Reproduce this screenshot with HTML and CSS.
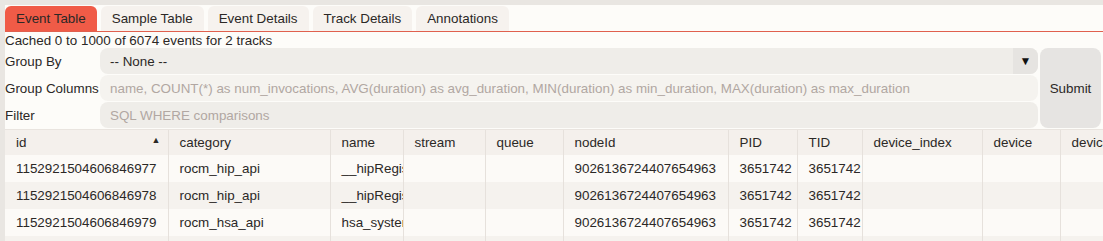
FILE: index.html
```html
<!DOCTYPE html>
<html>
<head>
    <link rel="stylesheet" href="styles.css">
</head>
<body>
    <div class="panel">
        <div class="tabs">
            <div class="tab active">Event Table</div>
            <div class="tab">Sample Table</div>
            <div class="tab">Event Details</div>
            <div class="tab">Track Details</div>
            <div class="tab">Annotations</div>
        </div>

        <div class="status">Cached 0 to 1000 of 6074 events for 2 tracks</div>

        <div class="query">
            <div class="fields">
                <div class="field">
                    <label>Group By</label>
                    <div class="select">
                        <span>-- None --</span>
                        <span class="arrow">&#9660;</span>
                    </div>
                </div>
                <div class="field">
                    <label>Group Columns</label>
                    <input class="text-input light" type="text" placeholder="name, COUNT(*) as num_invocations, AVG(duration) as avg_duration, MIN(duration) as min_duration, MAX(duration) as max_duration">
                </div>
                <div class="field">
                    <label>Filter</label>
                    <input class="text-input" type="text" placeholder="SQL WHERE comparisons">
                </div>
            </div>
            <button class="submit">Submit</button>
        </div>

        <div class="table-wrap">
            <table class="events">
                <colgroup>
                    <col style="width:163px">
                    <col style="width:162px">
                    <col style="width:73px">
                    <col style="width:82px">
                    <col style="width:78px">
                    <col style="width:165px">
                    <col style="width:69px">
                    <col style="width:65px">
                    <col style="width:120px">
                    <col style="width:78px">
                    <col style="width:90px">
                </colgroup>
                <thead>
                    <tr>
                        <th>id<span class="sort">&#9650;</span></th>
                        <th>category</th>
                        <th>name</th>
                        <th>stream</th>
                        <th>queue</th>
                        <th>nodeId</th>
                        <th>PID</th>
                        <th>TID</th>
                        <th>device_index</th>
                        <th>device</th>
                        <th>device_type</th>
                    </tr>
                </thead>
                <tbody>
                    <tr>
                        <td>1152921504606846977</td>
                        <td>rocm_hip_api</td>
                        <td>__hipRegisterFunction</td>
                        <td></td>
                        <td></td>
                        <td>9026136724407654963</td>
                        <td>3651742</td>
                        <td>3651742</td>
                        <td></td>
                        <td></td>
                        <td></td>
                    </tr>
                    <tr>
                        <td>1152921504606846978</td>
                        <td>rocm_hip_api</td>
                        <td>__hipRegisterFunction</td>
                        <td></td>
                        <td></td>
                        <td>9026136724407654963</td>
                        <td>3651742</td>
                        <td>3651742</td>
                        <td></td>
                        <td></td>
                        <td></td>
                    </tr>
                    <tr>
                        <td>1152921504606846979</td>
                        <td>rocm_hsa_api</td>
                        <td>hsa_system_get_info</td>
                        <td></td>
                        <td></td>
                        <td>9026136724407654963</td>
                        <td>3651742</td>
                        <td>3651742</td>
                        <td></td>
                        <td></td>
                        <td></td>
                    </tr>
                    <tr class="filler">
                        <td></td><td></td><td></td><td></td><td></td><td></td>
                        <td></td><td></td><td></td><td></td><td></td>
                    </tr>
                </tbody>
            </table>
        </div>
    </div>
</body>
</html>
```

FILE: styles.css
```css
body {
    font-family: "Liberation Sans", Arial, sans-serif;
    font-size: 13.4px;
    color: #2b2826;
    margin: 0;
    padding: 5px 0 0 5px;
    background: #e9e6e2;
    height: 241px;
    overflow: hidden;
    box-sizing: border-box;
}

.panel {
    background: #fdfcf9;
    height: 100%;
}

.tabs {
    display: flex;
    gap: 4px;
    border-bottom: 1px solid #e0604e;
    padding-top: 1px;
}

.tab {
    height: 25px;
    line-height: 25px;
    padding: 0 11px;
    background: #f6f2ee;
    border-radius: 6px 6px 0 0;
    color: #2b2826;
}

.tab.active {
    background: #f05b47;
}

.status {
    height: 15px;
    line-height: 15px;
    padding-top: 1px;
}

.query {
    display: flex;
    gap: 2px;
    padding-right: 2px;
}

.fields {
    flex: 1;
    display: flex;
    flex-direction: column;
    gap: 1px;
}

.field {
    display: flex;
    align-items: center;
    height: 26px;
}

.field label {
    width: 95px;
    flex: none;
}

.select,
.text-input {
    flex: 1;
    height: 26px;
    box-sizing: border-box;
    border: none;
    border-radius: 8px;
    background: #efede9;
    font: inherit;
    padding: 0 10px;
    outline: none;
}

.text-input.light {
    background: #f5f3ef;
}

.text-input::placeholder {
    color: #b1a7a2;
}

.select {
    display: flex;
    align-items: center;
    justify-content: space-between;
    padding-right: 0;
    overflow: hidden;
}

.arrow {
    width: 25px;
    height: 100%;
    display: flex;
    align-items: center;
    justify-content: center;
    background: #e6e4e1;
    font-size: 12px;
    color: #111;
}

.submit {
    width: 61px;
    border: none;
    border-radius: 8px;
    background: #e6e4e2;
    font: inherit;
    color: #2b2826;
    padding: 0;
}

.table-wrap {
    margin-top: 1px;
    overflow: hidden;
    border-top: 1px solid #e9e4df;
}

.events {
    table-layout: fixed;
    border-collapse: collapse;
    width: 1145px;
}

.events th,
.events td {
    text-align: left;
    font-weight: normal;
    white-space: nowrap;
    overflow: hidden;
    padding: 0 0 0 11px;
    border-right: 1px solid #e6e1dc;
    height: 27px;
    box-sizing: border-box;
}

.events th {
    height: 25px;
    background: #f4f0ec;
    position: relative;
}

.sort {
    position: absolute;
    right: 7px;
    top: 5px;
    font-size: 9px;
}

.events tbody tr:nth-child(odd) {
    background: #fcfaf7;
}

.events tbody tr:nth-child(even) {
    background: #f5f2ee;
}
```
